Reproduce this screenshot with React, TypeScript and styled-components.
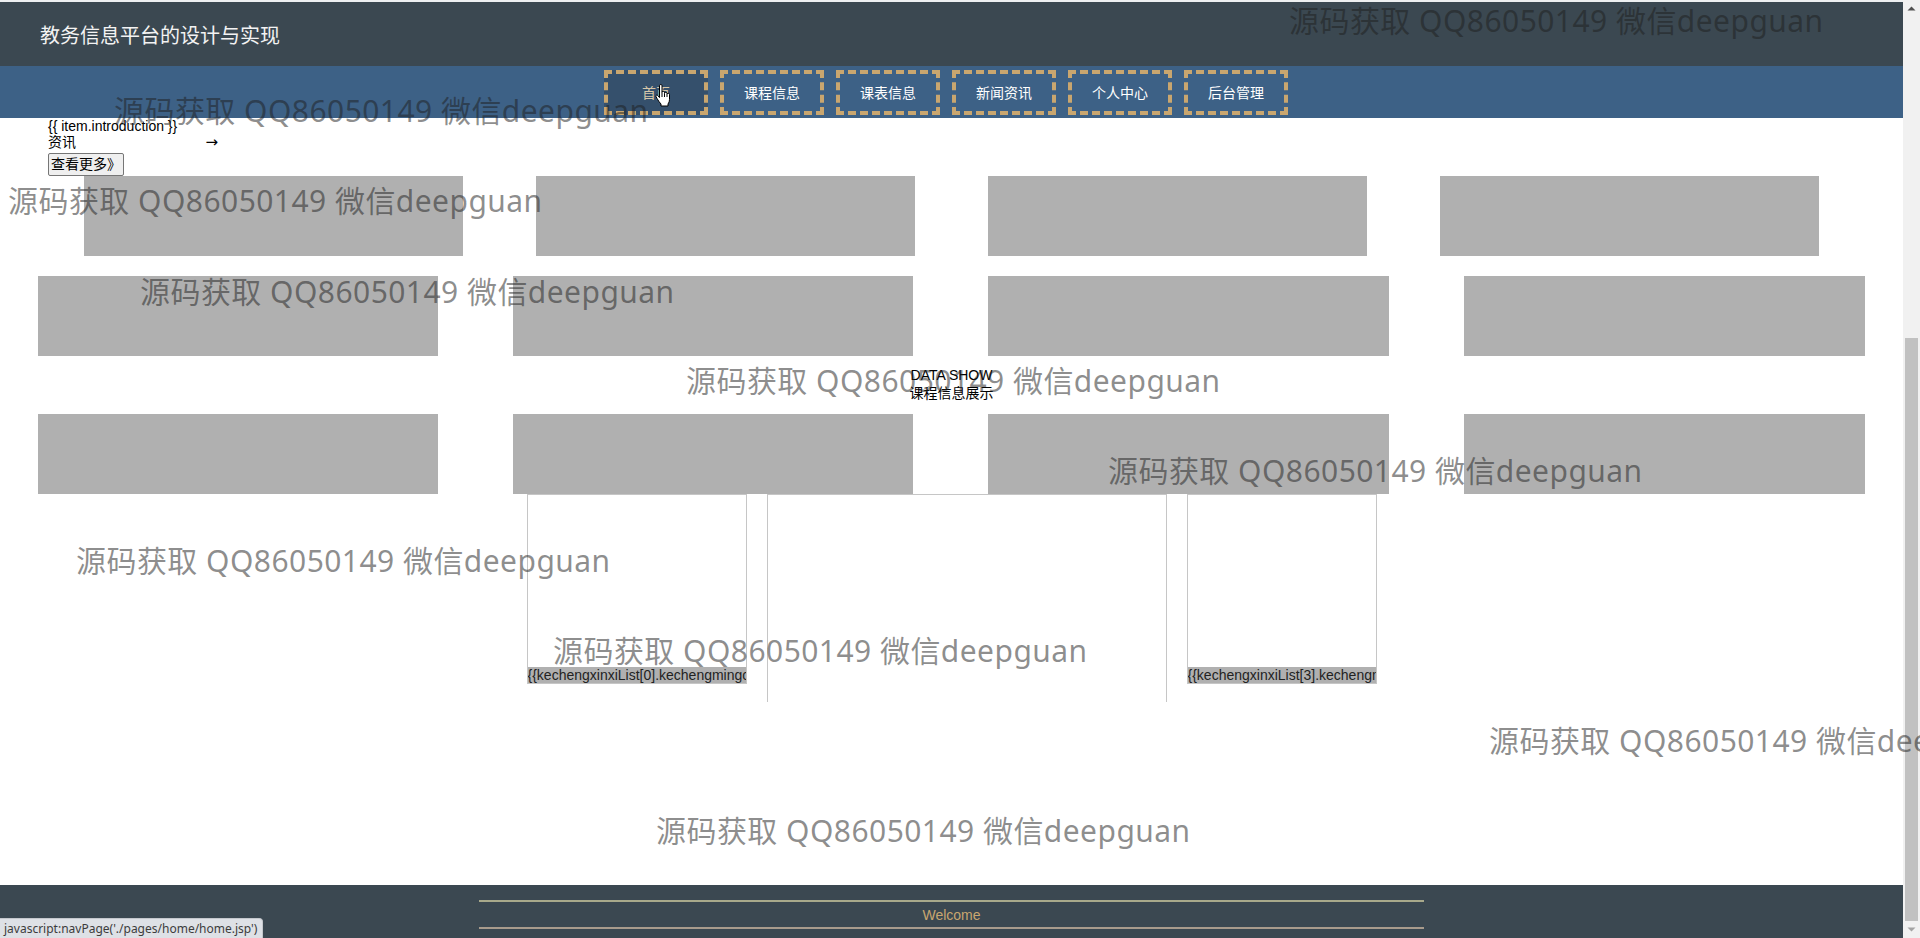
import React from 'react';
import styled, { createGlobalStyle } from 'styled-components';

const GlobalStyle = createGlobalStyle`
  html, body {
    margin: 0;
    padding: 0;
    height: 100%;
    overflow: hidden;
    background: #ffffff;
  }
  #root { height: 100%; }
  *, *::before, *::after { box-sizing: border-box; }
`;

const Shell = styled.div`
  position: relative;
  display: flex;
  width: 1920px;
  height: 938px;
  overflow: hidden;
  font-family: "Liberation Sans", "Noto Sans CJK SC", sans-serif;
  color: #000;
`;

const Page = styled.div`
  flex: 1;
  min-width: 0;
  display: flex;
  flex-direction: column;
`;

const TopStrip = styled.div`
  height: 2px;
  background: #eef0f1;
`;

const Header = styled.header`
  height: 64px;
  background: #3b4851;
  display: flex;
  align-items: center;
  padding: 1px 0 0 40px;
`;

const SiteTitle = styled.h1`
  margin: 0;
  font-family: "Noto Sans CJK SC", sans-serif;
  font-size: 20px;
  font-weight: 400;
  line-height: 24px;
  color: #f3f3f3;
`;

const NavBar = styled.nav`
  height: 52px;
  background: #3d6186;
  display: flex;
  justify-content: center;
  align-items: center;
  gap: 12px;
  padding: 1px 11px 0 0;
`;

const NavButton = styled.a<{ $active?: boolean }>`
  width: 104px;
  height: 45px;
  display: flex;
  align-items: center;
  justify-content: center;
  padding-bottom: 2px;
  border: 4px dashed #c9a66f;
  background: ${(p) => (p.$active ? '#35506c' : 'transparent')};
  color: ${(p) => (p.$active ? '#d6c7aa' : '#ffffff')};
  font-family: "Noto Sans CJK SC", sans-serif;
  font-size: 14px;
  text-decoration: none;
`;

const Content = styled.main`
  flex: 1;
  display: flex;
  flex-direction: column;
`;

const Intro = styled.section`
  padding-left: 48px;
  font-size: 14px;
  line-height: 16px;
  display: flex;
  flex-direction: column;
  align-items: flex-start;
`;

const IntroLine = styled.div`
  white-space: nowrap;
`;

const IntroRow = styled.div`
  width: 170px;
  display: flex;
  justify-content: space-between;
`;

const Arrow = styled.span`
  font-family: "DejaVu Sans", sans-serif;
  font-size: 15px;
  line-height: 16px;
`;

const MoreButton = styled.button`
  margin-top: 3px;
  height: 23px;
  padding: 2px 2px;
  border: 1px solid #767676;
  border-radius: 2px;
  background: #efefef;
  color: #000;
  font-family: "Liberation Sans", "Noto Sans CJK SC", sans-serif;
  font-size: 14px;
  line-height: 17px;
  display: flex;
  align-items: center;
`;

const BoxRow = styled.div<{ $gap: number; $top?: number }>`
  display: flex;
  justify-content: center;
  gap: ${(p) => p.$gap}px;
  margin-top: ${(p) => p.$top ?? 0}px;
`;

const GrayBox = styled.div<{ $w: number }>`
  width: ${(p) => p.$w}px;
  height: 80px;
  background: #b0b0b0;
`;

const SectionTitle = styled.div`
  padding: 10px 0 12px;
  text-align: center;
  font-size: 14px;
  line-height: 18px;
`;

const Carousel = styled.div`
  display: flex;
  justify-content: center;
  align-items: flex-start;
  gap: 20px;
`;

const Card = styled.div<{ $w: number }>`
  width: ${(p) => p.$w}px;
  height: 190px;
  border: 1px solid #c6c6c6;
  background: #fff;
  display: flex;
  flex-direction: column;
  justify-content: flex-end;
`;

const CardLabel = styled.div`
  background: #b0b0b0;
  color: #222;
  font-size: 14px;
  line-height: 16px;
  white-space: nowrap;
  overflow: hidden;
`;

const Frame = styled.div`
  width: 400px;
  height: 208px;
  border: 1px solid #c6c6c6;
  border-bottom: none;
`;

const Spacer = styled.div`
  flex: 1;
`;

const Footer = styled.footer`
  height: 53px;
  background: #3b4851;
  padding-top: 15px;
  display: flex;
  justify-content: center;
`;

const FooterInner = styled.div`
  width: 945px;
  height: 29px;
  border-top: 2px solid #a8a98b;
  border-bottom: 2px solid #a89b8c;
  display: flex;
  align-items: center;
  justify-content: center;
  color: #c9a66f;
  font-size: 14px;
`;

const Scrollbar = styled.div`
  width: 17px;
  background: #f1f1f1;
  display: flex;
  flex-direction: column;
`;

const ScrollArrow = styled.div`
  height: 17px;
  display: flex;
  align-items: center;
  justify-content: center;
`;

const ScrollTrack = styled.div`
  flex: 1;
  display: flex;
  flex-direction: column;
  justify-content: flex-end;
`;

const ScrollThumb = styled.div`
  height: 583px;
  margin: 0 2px;
  background: #c1c1c1;
`;

const WatermarkLayer = styled.div`
  position: absolute;
  inset: 0;
  overflow: hidden;
  pointer-events: none;
  z-index: 10;
`;

const Watermark = styled.div<{ $x: number; $y: number }>`
  position: absolute;
  left: ${(p) => p.$x}px;
  top: ${(p) => p.$y}px;
  white-space: nowrap;
  font-family: "Noto Sans", "Noto Sans CJK SC", sans-serif;
  font-size: 30px;
  line-height: 30px;
  letter-spacing: 0.45px;
  color: rgba(30, 30, 30, 0.52);
`;

const StatusBubble = styled.div`
  position: absolute;
  left: 0;
  bottom: 0;
  height: 20px;
  padding: 0 5px 0 4px;
  background: #dee1e6;
  border-top: 1px solid #c4c7cc;
  border-right: 1px solid #c4c7cc;
  border-top-right-radius: 4px;
  font-family: "Noto Sans", sans-serif;
  font-size: 12px;
  line-height: 19px;
  color: #3c3c3c;
  z-index: 20;
`;

const Cursor = styled.svg`
  position: absolute;
  left: 655px;
  top: 84px;
  z-index: 30;
`;

const navItems = ['首页', '课程信息', '课表信息', '新闻资讯', '个人中心', '后台管理'];

const watermarks: Array<[number, number]> = [
  [1289, 6],
  [114, 96],
  [8, 186],
  [140, 277],
  [686, 366],
  [1108, 456],
  [76, 546],
  [553, 636],
  [1489, 726],
  [656, 816],
];

export default function App() {
  return (
    <>
      <GlobalStyle />
      <Shell>
        <Page>
          <TopStrip />
          <Header>
            <SiteTitle>教务信息平台的设计与实现</SiteTitle>
          </Header>
          <NavBar>
            {navItems.map((item, i) => (
              <NavButton key={item} $active={i === 0} href="#">
                {item}
              </NavButton>
            ))}
          </NavBar>
          <Content>
            <Intro>
              <IntroLine>{'{{ item.introduction }}'}</IntroLine>
              <IntroRow>
                <span>资讯</span>
                <Arrow>→</Arrow>
              </IntroRow>
              <MoreButton>查看更多》</MoreButton>
            </Intro>
            <BoxRow $gap={73}>
              <GrayBox $w={379} />
              <GrayBox $w={379} />
              <GrayBox $w={379} />
              <GrayBox $w={379} />
            </BoxRow>
            <BoxRow $gap={75} $top={20}>
              <GrayBox $w={400} />
              <GrayBox $w={400} />
              <GrayBox $w={401} />
              <GrayBox $w={401} />
            </BoxRow>
            <SectionTitle>
              <div>DATA SHOW</div>
              <div>课程信息展示</div>
            </SectionTitle>
            <BoxRow $gap={75}>
              <GrayBox $w={400} />
              <GrayBox $w={400} />
              <GrayBox $w={401} />
              <GrayBox $w={401} />
            </BoxRow>
            <Carousel>
              <Card $w={220}>
                <CardLabel>{'{{kechengxinxiList[0].kechengmingcheng}}'}</CardLabel>
              </Card>
              <Frame />
              <Card $w={190}>
                <CardLabel>{'{{kechengxinxiList[3].kechengmingcheng}}'}</CardLabel>
              </Card>
            </Carousel>
            <Spacer />
          </Content>
          <Footer>
            <FooterInner>Welcome</FooterInner>
          </Footer>
        </Page>
        <Scrollbar>
          <ScrollArrow>
            <svg width="9" height="5" viewBox="0 0 9 5">
              <path d="M0.5 4.5 L4.5 0.5 L8.5 4.5 Z" fill="#505050" />
            </svg>
          </ScrollArrow>
          <ScrollTrack>
            <ScrollThumb />
          </ScrollTrack>
          <ScrollArrow>
            <svg width="9" height="5" viewBox="0 0 9 5">
              <path d="M0.5 0.5 L4.5 4.5 L8.5 0.5 Z" fill="#a3a3a3" />
            </svg>
          </ScrollArrow>
        </Scrollbar>
        <WatermarkLayer>
          {watermarks.map(([x, y], i) => (
            <Watermark key={i} $x={x} $y={y}>
              源码获取 QQ86050149 微信deepguan
            </Watermark>
          ))}
        </WatermarkLayer>
        <Cursor width="17" height="23" viewBox="0 0 17 23">
          <path
            d="M4.5 1.7 Q4.5 0.5 5.75 0.5 Q7 0.5 7 1.7 V8.3 Q7 7.3 8.25 7.3 Q9.5 7.3 9.5 8.3 V9.3 Q9.5 8.3 10.75 8.3 Q12 8.3 12 9.3 V10.3 Q12 9.3 13.25 9.3 Q14.5 9.3 14.5 10.3 V15.5 Q14.5 18 13 20 V22 H6 V20 Q4.2 18.2 2.2 14.8 L1 12.6 Q0.6 11.6 1.5 11.2 Q2.4 10.9 3.2 12 L4.5 13.6 Z"
            fill="#ffffff"
            stroke="#000000"
            strokeWidth="1"
          />
          <path d="M7 8.3 V13 M9.5 9.3 V13 M12 10.3 V13" stroke="#000" strokeWidth="1" fill="none" />
        </Cursor>
        <StatusBubble>javascript:navPage('./pages/home/home.jsp')</StatusBubble>
      </Shell>
    </>
  );
}
